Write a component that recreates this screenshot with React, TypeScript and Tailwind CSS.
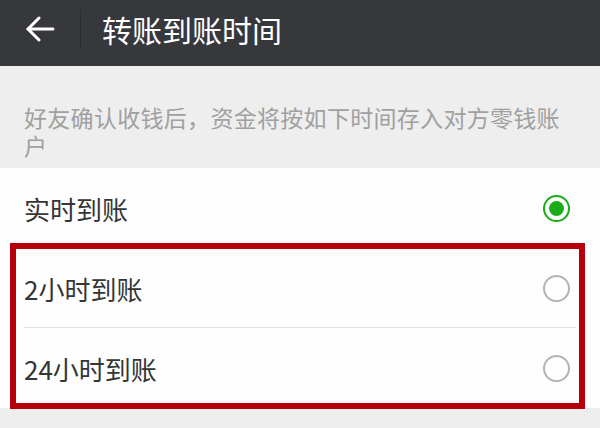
const font = { fontFamily: '"Noto Sans CJK SC", "Noto Sans", sans-serif' };

function Radio({ checked }: { checked?: boolean }) {
  if (checked) {
    return (
      <span className="flex h-[27px] w-[27px] items-center justify-center rounded-full border-2 border-[#1aad19]">
        <span className="h-[15px] w-[15px] rounded-full bg-[#1aad19]" />
      </span>
    );
  }
  return <span className="block h-[27px] w-[27px] rounded-full border-2 border-[#b2b2b2]" />;
}

function Row({ label, checked, last }: { label: string; checked?: boolean; last?: boolean }) {
  return (
    <div className="relative flex h-[80px] items-center justify-between pl-6 pr-[30px]">
      <span className="text-[26px] text-[#353535]">{label}</span>
      <Radio checked={checked} />
      {!last && <div className="absolute bottom-0 left-6 right-6 h-px bg-[#e3e3e3]" />}
    </div>
  );
}

export default function App() {
  return (
    <div className="relative h-[428px] w-[600px] overflow-hidden bg-[#eeeeee]" style={font}>
      {/* Header */}
      <div className="flex h-[66px] items-center bg-[#37383c] pb-2">
        <div className="flex w-[80px] justify-center">
          <svg width="30" height="26" viewBox="0 0 30 26" fill="none" stroke="white" strokeWidth="3" strokeLinecap="round" strokeLinejoin="round">
            <path d="M28 13H3" />
            <path d="M14 2L3 13l11 11" />
          </svg>
        </div>
        <div className="h-[38px] w-px bg-[#2c2d30]" />
        <h1 className="ml-[21px] text-[30px] text-white">转账到账时间</h1>
      </div>

      {/* Description */}
      <p className="px-6 pb-[9px] pt-[37px] text-[23px] leading-[28px] tracking-[0.3px] text-[#a0a0a0]">
        好友确认收钱后，资金将按如下时间存入对方零钱账户
      </p>

      {/* Options */}
      <div className="bg-[#fdfdfd]">
        <Row label="实时到账" checked />
        <Row label="2小时到账" />
        <Row label="24小时到账" last />
      </div>

      {/* Annotation box */}
      <div className="absolute left-[10px] top-[243px] h-[166px] w-[575px] border-[6px] border-[#b5000c]" />
    </div>
  );
}
